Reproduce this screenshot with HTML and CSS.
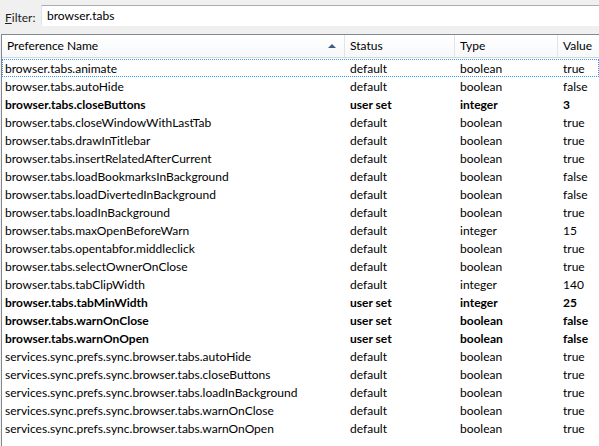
FILE: index.html
```html
<!DOCTYPE html>
<html>
<head>
<meta charset="utf-8">
<link rel="stylesheet" href="styles.css">
</head>
<body>
<div class="filterbar">
  <label class="flabel"><u>F</u>ilter:</label>
  <div class="fbox">browser.tabs</div>
</div>
<div class="tree">
  <div class="head">
    <div class="hc c1">Preference Name<span class="sort"></span></div>
    <div class="hc c2">Status</div>
    <div class="hc c3">Type</div>
    <div class="hc c4">Value</div>
  </div>
  <div class="rows">
    <div class="row focus"><span class="c1">browser.tabs.animate</span><span class="c2">default</span><span class="c3">boolean</span><span class="c4">true</span></div>
    <div class="row"><span class="c1">browser.tabs.autoHide</span><span class="c2">default</span><span class="c3">boolean</span><span class="c4">false</span></div>
    <div class="row user"><span class="c1">browser.tabs.closeButtons</span><span class="c2">user set</span><span class="c3">integer</span><span class="c4">3</span></div>
    <div class="row"><span class="c1">browser.tabs.closeWindowWithLastTab</span><span class="c2">default</span><span class="c3">boolean</span><span class="c4">true</span></div>
    <div class="row"><span class="c1">browser.tabs.drawInTitlebar</span><span class="c2">default</span><span class="c3">boolean</span><span class="c4">true</span></div>
    <div class="row"><span class="c1">browser.tabs.insertRelatedAfterCurrent</span><span class="c2">default</span><span class="c3">boolean</span><span class="c4">true</span></div>
    <div class="row"><span class="c1">browser.tabs.loadBookmarksInBackground</span><span class="c2">default</span><span class="c3">boolean</span><span class="c4">false</span></div>
    <div class="row"><span class="c1">browser.tabs.loadDivertedInBackground</span><span class="c2">default</span><span class="c3">boolean</span><span class="c4">false</span></div>
    <div class="row"><span class="c1">browser.tabs.loadInBackground</span><span class="c2">default</span><span class="c3">boolean</span><span class="c4">true</span></div>
    <div class="row"><span class="c1">browser.tabs.maxOpenBeforeWarn</span><span class="c2">default</span><span class="c3">integer</span><span class="c4">15</span></div>
    <div class="row"><span class="c1">browser.tabs.opentabfor.middleclick</span><span class="c2">default</span><span class="c3">boolean</span><span class="c4">true</span></div>
    <div class="row"><span class="c1">browser.tabs.selectOwnerOnClose</span><span class="c2">default</span><span class="c3">boolean</span><span class="c4">true</span></div>
    <div class="row"><span class="c1">browser.tabs.tabClipWidth</span><span class="c2">default</span><span class="c3">integer</span><span class="c4">140</span></div>
    <div class="row user"><span class="c1">browser.tabs.tabMinWidth</span><span class="c2">user set</span><span class="c3">integer</span><span class="c4">25</span></div>
    <div class="row user"><span class="c1">browser.tabs.warnOnClose</span><span class="c2">user set</span><span class="c3">boolean</span><span class="c4">false</span></div>
    <div class="row user"><span class="c1">browser.tabs.warnOnOpen</span><span class="c2">user set</span><span class="c3">boolean</span><span class="c4">false</span></div>
    <div class="row"><span class="c1">services.sync.prefs.sync.browser.tabs.autoHide</span><span class="c2">default</span><span class="c3">boolean</span><span class="c4">true</span></div>
    <div class="row"><span class="c1">services.sync.prefs.sync.browser.tabs.closeButtons</span><span class="c2">default</span><span class="c3">boolean</span><span class="c4">true</span></div>
    <div class="row"><span class="c1">services.sync.prefs.sync.browser.tabs.loadInBackground</span><span class="c2">default</span><span class="c3">boolean</span><span class="c4">true</span></div>
    <div class="row"><span class="c1">services.sync.prefs.sync.browser.tabs.warnOnClose</span><span class="c2">default</span><span class="c3">boolean</span><span class="c4">true</span></div>
    <div class="row"><span class="c1">services.sync.prefs.sync.browser.tabs.warnOnOpen</span><span class="c2">default</span><span class="c3">boolean</span><span class="c4">true</span></div>
  </div>
</div>
</body>
</html>
```
FILE: styles.css
```css
html, body {
  margin: 0;
  padding: 0;
  width: 599px;
  height: 446px;
  overflow: hidden;
  background: #f0f0f0;
  font-family: "Lato", "Open Sans", sans-serif;
  font-size: 12px;
  color: #000;
}
.filterbar {
  display: flex;
  align-items: center;
  height: 34px;
}
.flabel {
  width: 36px;
  padding-left: 5px;
  color: #1e1e1e;
}
.fbox {
  flex: 1;
  height: 20px;
  line-height: 20px;
  background: #fff;
  border-top: 1px solid #abadb3;
  border-left: 1px solid #e2e3ea;
  padding-left: 5px;
  margin-top: -4px;
}
.tree {
  margin-left: 1px;
  border-top: 1px solid #828790;
  border-left: 1px solid #828790;
  background: #fff;
  height: 412px;
}
.head {
  display: grid;
  grid-template-columns: 343px 110px 103px 1fr;
  height: 22px;
  background: linear-gradient(#ffffff, #f7f8fa);
  border-bottom: 1px solid #d5d5d5;
}
.hc {
  position: relative;
  line-height: 22px;
  padding-left: 5px;
  border-right: 1px solid #e3e4e6;
  white-space: nowrap;
}
.hc.c4 { border-right: none; }
.sort {
  position: absolute;
  right: 8px;
  top: 9px;
  width: 0;
  height: 0;
  border-left: 4px solid transparent;
  border-right: 4px solid transparent;
  border-bottom: 4px solid #3c5e80;
}
.rows {
  padding-top: 1px;
}
.row {
  display: grid;
  grid-template-columns: 344px 110px 103px 1fr;
  height: 18px;
  line-height: 18px;
  white-space: nowrap;
  box-sizing: border-box;
  border: 1px solid transparent;
}
.row span { padding-left: 3px; overflow: hidden; }
.row .c1 { padding-left: 2px; }
.row.focus {
  border: 1px dotted #3399ff;
}
.row.user { font-weight: bold; }
```
